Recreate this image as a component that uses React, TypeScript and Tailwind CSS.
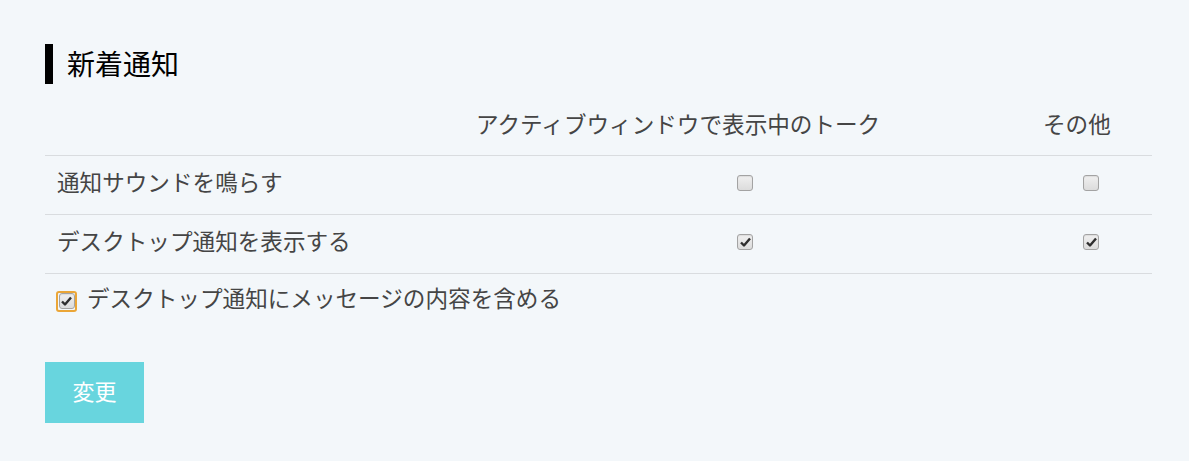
import React from "react";

const font = {
  fontFamily: '"Noto Sans CJK JP", "Noto Sans", sans-serif',
};

type BoxProps = {
  checked?: boolean;
  focused?: boolean;
};

const Box: React.FC<BoxProps> = ({ checked, focused }) => {
  const box = (
    <span className="flex h-[16px] w-[16px] items-center justify-center rounded-[3px] border border-[#a3a3a3] bg-gradient-to-b from-[#f0f0f0] to-[#dcdcdc] shadow-[inset_0_1px_1px_rgba(0,0,0,0.08)]">
      {checked && (
        <svg width="11" height="10" viewBox="0 0 11 10">
          <path
            d="M1 5.5 L4 8.5 L10 1.5"
            fill="none"
            stroke="#2e2e2e"
            strokeWidth="2.4"
            strokeLinejoin="round"
          />
        </svg>
      )}
    </span>
  );
  if (focused) {
    return (
      <span className="flex h-[21px] w-[21px] items-center justify-center rounded-[3px] border-2 border-[#eba637]">
        {box}
      </span>
    );
  }
  return box;
};

const rows = [
  { label: "通知サウンドを鳴らす", active: false, other: false },
  { label: "デスクトップ通知を表示する", active: true, other: true },
];

export default function App() {
  return (
    <div
      className="min-h-[461px] w-full bg-[#f3f7fa] px-[45px] pt-[44px] text-[#454545]"
      style={font}
    >
      <h2 className="flex h-[40px] items-center border-l-[8px] border-black pl-[14px] text-[28px] leading-none text-black">
        <span className="mb-[3px]">新着通知</span>
      </h2>

      <div className="mt-[16px] w-[1107px] text-[22.6px] leading-none">
        <div className="grid h-[56px] grid-cols-[415px_570px_122px] items-center border-b border-[#d9dcdf]">
          <div />
          <div className="mb-[6px] pl-[16px]">アクティブウィンドウで表示中のトーク</div>
          <div className="mb-[6px] pl-[13px]">その他</div>
        </div>
        {rows.map((row) => (
          <div
            key={row.label}
            className="grid h-[59px] grid-cols-[415px_570px_122px] items-center border-b border-[#d9dcdf]"
          >
            <div className="mb-[5px] pl-[12px]">{row.label}</div>
            <div className="mb-[4px] flex justify-center">
              <Box checked={row.active} />
            </div>
            <div className="mb-[4px] flex justify-center">
              <Box checked={row.other} />
            </div>
          </div>
        ))}
        <label className="flex h-[54px] items-center gap-[10px] pl-[11px]">
          <Box checked focused />
          <span className="mb-[5px]">デスクトップ通知にメッセージの内容を含める</span>
        </label>
      </div>

      <button className="mt-[34px] flex h-[61px] w-[99px] items-center justify-center bg-[#68d5de] text-[22px] leading-none text-white">
        <span className="mb-[6px]">変更</span>
      </button>
    </div>
  );
}
